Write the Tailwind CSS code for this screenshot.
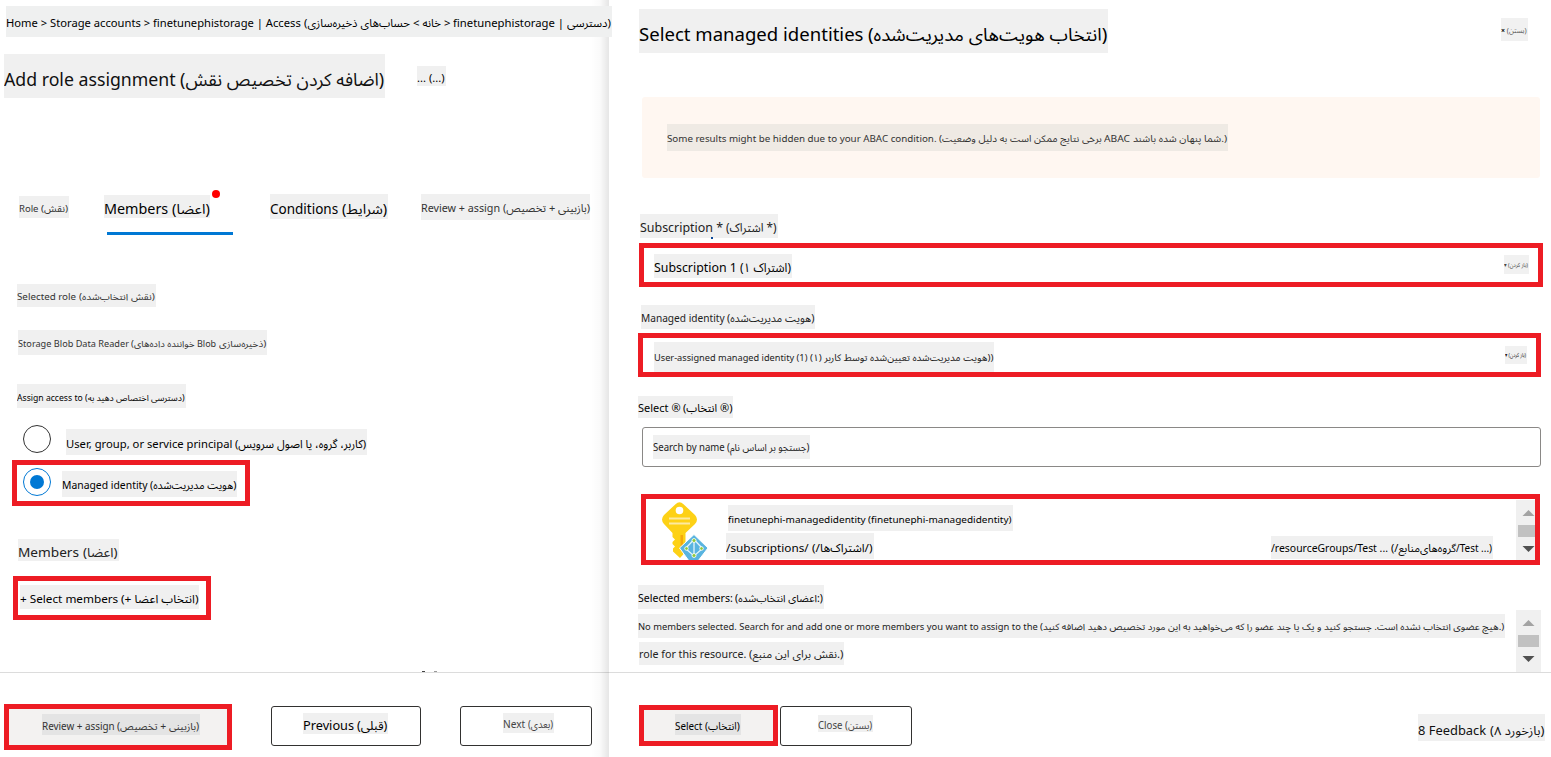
<!DOCTYPE html>
<html lang="en">
<head>
<meta charset="utf-8">
<title>Add role assignment</title>
<script src="https://cdn.jsdelivr.net/npm/@tailwindcss/browser@4"></script>
</head>
<body class="w-[1551px] h-[757px] overflow-hidden bg-white text-black font-['Noto_Sans','Noto_Sans_Arabic','DejaVu_Sans',sans-serif] [&_[data-fit]]:whitespace-pre [&_[data-fit]]:shrink-0">
<div class="flex h-[757px]">

<!-- Left: role assignment form -->
<main class="relative w-[609px] h-[757px] shrink-0 flex flex-col">
  <div class="absolute right-0 top-0 w-[18px] h-full bg-linear-to-r from-transparent via-black/2 to-black/10"></div>
  <div class="h-[672px] relative">
    <nav class="relative z-10 mt-[6px] ml-[6px] flex w-[606px] h-[31px] bg-[#eff0f0] text-[11px] leading-[34px]"><span data-fit class="w-[298px]">Home &gt; Storage accounts &gt; finetunephistorage | Access </span><span data-fit class="w-[149px]">(<bdi>خانه &gt; حساب‌های ذخیره‌سازی</bdi> &gt; </span><span data-fit class="w-[114px]">finetunephistorage | </span><span data-fit class="w-[44px]">دسترسی)</span></nav>
    <div class="mt-[17px] flex items-start">
      <h1 class="ml-[4px] flex w-[381px] h-[44px] bg-[#f0f0f0] text-[17.5px] leading-[50px] text-[#111]"><span data-fit class="w-[176px]">Add role assignment </span><span data-fit class="w-[204px]">(اضافه کردن تخصیص نقش)</span></h1>
      <div class="ml-[32px] mt-[12px] flex w-[29px] h-[20px] bg-[#f0f0f0] text-[10px] leading-[25px]"><span data-fit class="w-[28px]">... (...)</span></div>
    </div>
    <div class="mt-[96px] h-[26px] flex items-start">
      <div class="ml-[19px] mt-[2px] flex w-[50px] h-[22px] bg-[#f0f0f0] text-[9.5px] leading-[25px] text-[#333]"><span data-fit class="w-[22px]">Role </span><span data-fit class="w-[27px]">(نقش)</span></div>
      <div class="relative ml-[35px] mt-[1px] flex w-[106px] h-[23px] bg-[#f0f0f0] text-[13.5px] leading-[29px]"><span data-fit class="w-[68px]">Members </span><span data-fit class="w-[38px]">(اعضا)</span><i class="absolute left-[108px] -top-[5px] size-[8px] rounded-full bg-[#f00]"></i></div>
      <div class="ml-[60px] flex w-[118px] h-[25px] bg-[#f0f0f0] text-[13.5px] leading-[30px]"><span data-fit class="w-[72px]">Conditions </span><span data-fit class="w-[45px]">(شرایط)</span></div>
      <div class="ml-[33px] flex w-[169px] h-[26px] bg-[#f0f0f0] text-[11px] leading-[28px] text-[#333]"><span data-fit class="w-[82px]">Review + assign </span><span data-fit class="w-[87px]">(بازبینی + تخصیص)</span></div>
    </div>
    <div class="mt-[12px] ml-[107px] w-[126px] h-[3px] bg-[#0078d4]"></div>
    <div class="mt-[49px] ml-[17px] flex w-[139px] h-[23px] bg-[#f0f0f0] text-[9px] leading-[25px] text-[#333]"><span data-fit class="w-[62px]">Selected role </span><span data-fit class="w-[76px]">(نقش انتخاب‌شده)</span></div>
    <div class="mt-[23px] ml-[18px] flex w-[249px] h-[25px] bg-[#f0f0f0] text-[9px] leading-[27px] text-[#333]"><span data-fit class="w-[113px]">Storage Blob Data Reader </span><span data-fit class="w-[66px]">(خواننده داده‌های </span><span data-fit class="w-[22px]">Blob </span><span data-fit class="w-[47px]">ذخیره‌سازی)</span></div>
    <div class="mt-[29px] ml-[17px] flex w-[169px] h-[24px] bg-[#f0f0f0] text-[8.5px] leading-[27px]"><span data-fit class="w-[68px]">Assign access to </span><span data-fit class="w-[100px]">(دسترسی اختصاص دهید به)</span></div>
    <div class="mt-[17px] h-[35px] flex items-start">
      <i class="ml-[23px] size-[28px] rounded-full border border-[#333]"></i>
      <div class="ml-[15px] mt-[4px] flex w-[301px] h-[26px] bg-[#f0f0f0] text-[11.5px] leading-[29px]"><span data-fit class="w-[169px]">User, group, or service principal </span><span data-fit class="w-[131px]">(کاربر، گروه، یا اصول سرویس)</span></div>
    </div>
    <div class="ml-[12px] w-[238px] h-[46px] border-5 border-[#ed1c24] flex items-start">
      <i class="ml-[6px] mt-[3px] size-[28px] rounded-full border border-[#0078d4] grid place-items-center"><i class="size-[14px] rounded-full bg-[#0078d4]"></i></i>
      <div class="ml-[11px] mt-[6px] flex w-[175px] h-[26px] bg-[#f0f0f0] text-[10.5px] leading-[28px]"><span data-fit class="w-[88px]">Managed identity </span><span data-fit class="w-[86px]">(هویت مدیریت‌شده)</span></div>
    </div>
    <div class="mt-[33px] ml-[18px] flex w-[101px] h-[22px] bg-[#f0f0f0] text-[13px] leading-[26px] text-[#222]"><span data-fit class="w-[65px]">Members </span><span data-fit class="w-[35px]">(اعضا)</span></div>
    <div class="mt-[15px] ml-[13px] w-[198px] h-[44px] border-5 border-[#ed1c24] flex items-start">
      <div class="ml-[2px] mt-[4px] flex w-[179px] h-[24px] bg-[#f0f0f0] text-[11.5px] leading-[27px]"><span data-fit class="w-[101px]">+ Select members </span><span data-fit class="w-[77px]">(<bdi dir="rtl">انتخاب اعضا +</bdi>)</span></div>
    </div>
    <div class="mt-[51px] ml-[422px] flex gap-[9px]"><i class="w-[3px] h-px bg-[#444]"></i><i class="w-[3px] h-px bg-[#999]"></i></div>
  </div>
  <footer class="h-[85px] border-t border-[#dcdcdc] flex items-start">
    <div class="ml-[4px] mt-[31px] w-[228px] h-[46px] border-5 border-[#ed1c24] bg-[#f3f2f1] flex items-start">
      <div class="ml-[33px] mt-[5px] flex w-[158px] h-[21px] bg-[#e4e4e4] text-[10px] leading-[24px] text-[#333]"><span data-fit class="w-[75px]">Review + assign </span><span data-fit class="w-[82px]">(بازبینی + تخصیص)</span></div>
    </div>
    <div class="ml-[39px] mt-[33px] w-[150px] h-[40px] border border-[#323130] rounded-[3px] flex items-start">
      <div class="ml-[31px] mt-[6px] flex w-[85px] h-[21px] bg-[#f0f0f0] text-[12.5px] leading-[26px]"><span data-fit class="w-[54px]">Previous </span><span data-fit class="w-[30px]">(قبلی)</span></div>
    </div>
    <div class="ml-[39px] mt-[33px] w-[132px] h-[40px] border border-[#323130] rounded-[3px] flex items-start">
      <div class="ml-[42px] mt-[6px] flex w-[51px] h-[20px] bg-[#f0f0f0] text-[10.5px] leading-[23px] text-[#444]"><span data-fit class="w-[25px]">Next </span><span data-fit class="w-[25px]">(بعدی)</span></div>
    </div>
  </footer>
</main>

<!-- Right: managed identity picker -->
<aside class="w-[942px] h-[757px] shrink-0 flex flex-col">
  <div class="h-[672px]">
    <div class="pt-[9px] flex items-start">
      <h2 class="ml-[30px] flex w-[469px] h-[44px] bg-[#f0f0f0] text-[17.5px] leading-[50px]"><span data-fit class="w-[229px]">Select managed identities </span><span data-fit class="w-[239px]">(انتخاب هویت‌های مدیریت‌شده)</span></h2>
      <div class="ml-[393px] mt-[9px] flex w-[27px] h-[23px] bg-[#f1f1f1] text-[7px] leading-[25px] text-[#555]"><span data-fit class="w-[26px]"><b class="text-black">×</b> (بستن)</span></div>
    </div>
    <div class="mt-[44px] ml-[33px] w-[898px] h-[81px] rounded-[3px] bg-[#fff7f1] flex items-start">
      <div class="ml-[25px] mt-[27px] flex w-[561px] h-[27px] bg-[#efeae4] text-[9.5px] leading-[29px] text-[#333]"><span data-fit class="w-[272px]">Some results might be hidden due to your ABAC condition. </span><span data-fit class="w-[165px]">(برخی نتایج ممکن است به دلیل وضعیت </span><span data-fit class="w-[29px]">ABAC </span><span data-fit class="w-[94px]">شما پنهان شده باشند.)</span></div>
    </div>
    <div class="relative mt-[36px] ml-[31px] flex w-[138px] h-[24px] bg-[#f0f0f0] text-[12px] leading-[28px] text-[#222]"><span data-fit class="w-[86px]">Subscription * </span><span data-fit class="w-[51px]">(اشتراک *)</span><i class="absolute left-[71px] top-[23px] w-[2px] h-[2px] bg-[#0b4a9a]"></i></div>
    <div class="mt-[5px] ml-[30px] w-[904px] h-[44px] border-5 border-[#ed1c24] flex items-start">
      <div class="ml-[10px] mt-[6px] flex w-[138px] h-[24px] bg-[#f0f0f0] text-[12.5px] leading-[28px]"><span data-fit class="w-[86px]">Subscription 1 </span><span data-fit class="w-[51px]">(اشتراک ۱)</span></div>
      <div class="ml-[712px] mt-[7px] flex w-[25px] h-[19px] bg-[#f1f1f1] text-[6px] leading-[20px] text-[#444]"><span data-fit class="w-[24px]">▾ (باز کردن)</span></div>
    </div>
    <div class="mt-[18px] ml-[32px] flex w-[174px] h-[24px] bg-[#f0f0f0] text-[10.5px] leading-[27px] text-[#222]"><span data-fit class="w-[86px]">Managed identity </span><span data-fit class="w-[87px]">(هویت مدیریت‌شده)</span></div>
    <div class="mt-[4px] ml-[29px] w-[903px] h-[44px] border-5 border-[#ed1c24] flex items-start">
      <div class="ml-[11px] mt-[4px] flex w-[340px] h-[30px] bg-[#f0f0f0] text-[9.5px] leading-[32px] text-[#222]"><span data-fit class="w-[156px]">User-assigned managed identity (1) </span><span data-fit class="w-[183px]">(<bdi>۱</bdi>) <bdi>هویت مدیریت‌شده تعیین‌شده توسط کاربر</bdi>))</span></div>
      <div class="ml-[511px] mt-[8px] flex w-[22px] h-[18px] bg-[#f1f1f1] text-[6px] leading-[18px] text-[#222]"><span data-fit class="w-[21px]">▾ (باز کردن)</span></div>
    </div>
    <div class="mt-[19px] ml-[29px] flex w-[95px] h-[22px] bg-[#f0f0f0] text-[11px] leading-[24px]"><span data-fit class="w-[45px]">Select ® </span><span data-fit class="w-[49px]">(انتخاب ®)</span></div>
    <div class="mt-[9px] ml-[33px] w-[899px] h-[40px] border border-[#8a8886] rounded-[3px] flex items-start">
      <div class="ml-[10px] mt-[7px] flex w-[157px] h-[24px] bg-[#f0f0f0] text-[10px] leading-[25px] text-[#222]"><span data-fit class="w-[74px]">Search by name </span><span data-fit class="w-[82px]">(جستجو بر اساس نام)</span></div>
    </div>
    <div class="mt-[27px] ml-[32px] w-[899px] h-[71px] border-5 border-[#ed1c24] flex items-start">
      <svg class="ml-[16px] mt-[3px] shrink-0" width="47" height="58" viewBox="0 0 47 58">
        <path fill="#fdd116" d="M13.500 2.200Q17.500-1.500 21.500 2.200L33 13Q37 17.500 33 22L23.500 31V50L18 56L11 49.500V46.500L13 44.500L10.500 42V40L13 37.500L10.500 35V31L2 22Q-2 17.500 2 13Z"/>
        <path fill="#f5a90c" d="M18.500 33h2.500v13l-2.500 3z"/>
        <circle cx="17.500" cy="8.500" r="3.800" fill="#fff"/>
        <path stroke="#fdeaa0" stroke-width="2" d="M7 16.500h21M7 21.500h21"/>
        <path fill="#59b4e0" stroke="#fff" stroke-width="1" d="M32 32.500L46 46L36 59H27L17.500 46Z"/>
        <path fill="none" stroke="#e4f4fb" stroke-width="1.300" d="M32 37.500L23.500 46.500L32 54L40.500 46.500ZM32 37.500V54"/>
        <g fill="#8fc93a" stroke="#fff" stroke-width=".8"><circle cx="32" cy="38.500" r="2"/><circle cx="24.500" cy="46.500" r="1.800"/><circle cx="39.500" cy="46.500" r="1.800"/><circle cx="32" cy="53.500" r="2"/></g>
      </svg>
      <div class="ml-[17px] mt-[6px] w-[830px] shrink-0">
        <div class="ml-[2px] flex w-[285px] h-[26px] bg-[#f0f0f0] text-[9.5px] leading-[29px]"><span data-fit class="w-[140px]">finetunephi-managedidentity </span><span data-fit class="w-[144px]">(finetunephi-managedidentity)</span></div>
        <div class="mt-[2px] flex items-start">
          <div class="flex w-[148px] h-[26px] bg-[#f0f0f0] text-[11.5px] leading-[29px]"><span data-fit class="w-[86px]">/subscriptions/ </span><span data-fit class="w-[61px]">(/اشتراک‌ها/)</span></div>
          <div class="ml-[397px] mt-[3px] flex w-[222px] h-[23px] bg-[#f0f0f0] text-[10.5px] leading-[24px]"><span data-fit class="w-[120px]">/resourceGroups/Test ... </span><span data-fit class="w-[65px]">(/گروه‌های‌منابع</span><span data-fit class="w-[36px]">/Test ...)</span></div>
        </div>
      </div>
      <svg class="-ml-[40px] mt-px shrink-0" width="19" height="60" viewBox="0 0 19 60"><path fill="#f0f0f0" d="M0 0h19v60H0z"/><path fill="#a3a3a3" d="M6.500 16l6-6 6 6z"/><path fill="#c1c1c1" d="M2 25h17v12H2z"/><path fill="#505050" d="M6.500 46h12l-6 6z"/></svg>
    </div>
    <div class="flex items-start">
      <div class="mt-[20px] ml-[29px] w-[867px]">
        <div class="flex w-[186px] h-[24px] bg-[#f0f0f0] text-[10px] leading-[27px]"><span data-fit class="w-[97px]">Selected members: </span><span data-fit class="w-[88px]">(اعضای انتخاب‌شده:)</span></div>
        <div class="mt-[5px] flex w-[867px] h-[24px] bg-[#f0f0f0] text-[9px] leading-[25px] text-[#222]"><span data-fit class="w-[402px]">No members selected. Search for and add one or more members you want to assign to the </span><span data-fit class="w-[464px]">(هیچ عضوی انتخاب نشده است. جستجو کنید و یک یا چند عضو را که می‌خواهید به این مورد تخصیص دهید اضافه کنید.)</span></div>
        <div class="mt-[4px] ml-px flex w-[205px] h-[23px] bg-[#f0f0f0] text-[10.5px] leading-[25px] text-[#222]"><span data-fit class="w-[110px]">role for this resource. </span><span data-fit class="w-[94px]">(نقش برای این منبع.)</span></div>
      </div>
      <svg class="mt-[45px] ml-[11px]" width="25" height="62" viewBox="0 0 25 62"><path fill="#f0f0f0" d="M0 0h25v62H0z"/><path fill="#a3a3a3" d="M6.500 16l6-6 6 6z"/><path fill="#c1c1c1" d="M2 25h21v12H2z"/><path fill="#505050" d="M6.500 46h12l-6 6z"/></svg>
    </div>
  </div>
  <footer class="h-[85px] border-t border-[#dcdcdc] flex items-start">
    <div class="ml-[30px] mt-[32px] w-[139px] h-[41px] border-5 border-[#ed1c24] bg-[#f3f2f1] flex items-start">
      <div class="ml-[31px] mt-[4px] flex w-[66px] h-[21px] bg-[#e4e4e4] text-[10.5px] leading-[24px]"><span data-fit class="w-[30px]">Select </span><span data-fit class="w-[35px]">(انتخاب)</span></div>
    </div>
    <div class="ml-[2px] mt-[33px] w-[132px] h-[40px] border border-[#323130] rounded-[3px] flex items-start">
      <div class="ml-[37px] mt-[8px] flex w-[55px] h-[17px] bg-[#f0f0f0] text-[10px] leading-[21px] text-[#444]"><span data-fit class="w-[27px]">Close </span><span data-fit class="w-[27px]">(بستن)</span></div>
    </div>
    <div class="ml-[506px] mt-[41px] flex w-[127px] h-[27px] bg-[#f0f0f0] text-[12px] leading-[33px] text-[#111]"><span data-fit class="w-[72px]">8 Feedback </span><span data-fit class="w-[54px]">(بازخورد ۸)</span></div>
  </footer>
</aside>
</div>
<script>
// Scale each text run horizontally so that it fills its column.
function fit(el) {
  var run = el.firstElementChild;
  if (el.clientWidth && run.offsetWidth) {
    run.style.transform = 'scaleX(' + el.clientWidth / run.offsetWidth + ')';
  }
}
var observer = new ResizeObserver(function (entries) {
  entries.forEach(function (entry) { fit(entry.target); });
});
document.querySelectorAll('[data-fit]').forEach(function (el) {
  var run = document.createElement('span');
  run.className = 'inline-block origin-left';
  while (el.firstChild) run.appendChild(el.firstChild);
  el.appendChild(run);
  observer.observe(el);
});
window.addEventListener('load', function () {
  document.querySelectorAll('[data-fit]').forEach(fit);
});
</script>
</body>
</html>
